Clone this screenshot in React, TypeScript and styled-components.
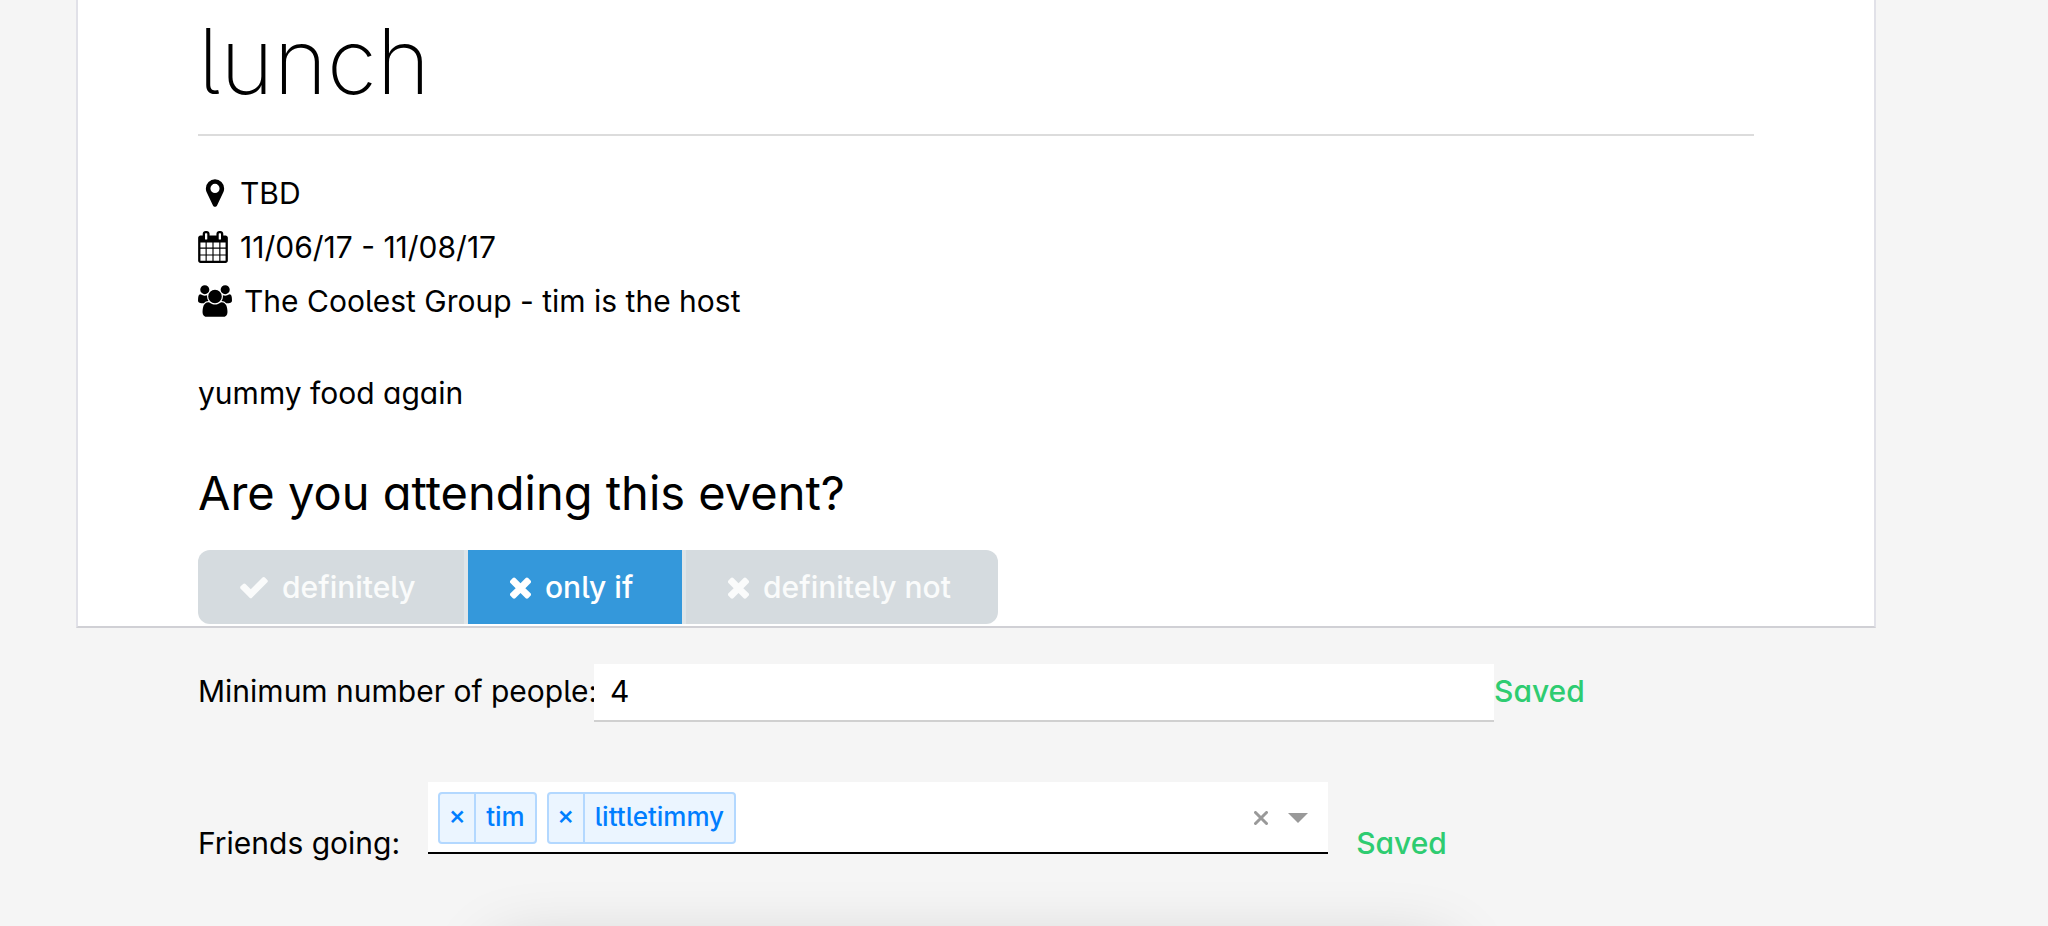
import React, { useState } from "react";
import styled, { createGlobalStyle } from "styled-components";

const GlobalStyle = createGlobalStyle`
  *, *::before, *::after { box-sizing: border-box; }
  body {
    margin: 0;
    background: #f5f5f5;
    color: #000;
    font-family: Inter, "Liberation Sans", sans-serif;
    font-size: 30px;
    line-height: 54px;
    font-feature-settings: "cv05", "cv11";
  }
  button, input { font: inherit; font-feature-settings: inherit; color: inherit; }
`;

const Page = styled.main`
  margin: 0 172px 0 76px;
`;

const Card = styled.section`
  padding: 0 120px 2px;
  background: #fff;
  border: 2px solid #e1e1e8;
  border-top: 0;
  border-bottom-color: #d0d0d5;
`;

const Title = styled.h1`
  margin: 0 0 30px;
  padding-bottom: 12px;
  border-bottom: 2px solid #dcdcdc;
  font-size: 91px;
  font-weight: 200;
  line-height: 122px;
`;

const Details = styled.ul`
  margin: 0 0 38px;
  padding: 0;
  list-style: none;
`;

const Detail = styled.li`
  display: flex;
  align-items: center;
  gap: 12px;
`;

const Icon = styled.svg`
  flex: none;
  height: 32px;
  fill: currentColor;
`;

const Description = styled.p`
  margin: 0 0 46px;
`;

const Question = styled.h2`
  margin: 0 0 30px;
  font-size: 47px;
  font-weight: 400;
`;

const Choices = styled.div`
  display: flex;
  height: 74px;
`;

const Choice = styled.button<{ $active: boolean; $width: number }>`
  display: flex;
  align-items: center;
  gap: 12px;
  width: ${(p) => p.$width}px;
  padding: 0 0 0 40px;
  border: 0;
  border-right: 4px solid #e0e5e8;
  background: ${(p) => (p.$active ? "#3498db" : "#d5dbdf")};
  color: ${(p) => (p.$active ? "#fff" : "#fafbfb")};
  font-weight: 500;
  white-space: nowrap;
  cursor: pointer;

  &:first-child { border-radius: 12px 0 0 12px; }
  &:last-child { border-radius: 0 12px 12px 0; border-right: 0; }
`;

const Row = styled.div<{ $top: number; $gap: number }>`
  display: flex;
  align-items: flex-end;
  gap: ${(p) => p.$gap}px;
  margin-top: ${(p) => p.$top}px;
  white-space: nowrap;
`;

const Label = styled.label<{ $width?: number }>`
  flex: none;
  width: ${(p) => (p.$width ? `${p.$width}px` : "auto")};
  padding-left: 122px;
`;

const CountRow = styled(Row)`
  align-items: flex-start;
`;

const CountInput = styled.input`
  flex: 0 0 50%;
  min-width: 0;
  height: 58px;
  padding: 0 16px 2px;
  border: 0;
  border-bottom: 2px solid #d0d0d0;
  border-radius: 0;
  outline: 0;
  background: #fff;
`;

const Saved = styled.span`
  color: #2ecc71;
  font-weight: 500;
`;

const Picker = styled.div`
  display: flex;
  align-items: center;
  flex: 0 0 50%;
  height: 72px;
  margin-bottom: 16px;
  padding: 2px 20px 0 10px;
  gap: 10px;
  background: #fff;
  border-bottom: 2px solid #000;
`;

const PickerInput = styled.input`
  flex: 1;
  min-width: 0;
  padding: 0;
  border: 0;
  outline: 0;
  background: transparent;
`;

const Chip = styled.span`
  display: flex;
  height: 52px;
  border: 2px solid #b3d8ff;
  border-radius: 4px;
  background: #ebf5ff;
  color: #007eff;
  font-size: 26px;
  font-weight: 500;
  line-height: 46px;
`;

const ChipRemove = styled.button`
  width: 36px;
  padding: 0 0 6px;
  border: 0;
  border-right: 2px solid #b3d8ff;
  background: none;
  line-height: 40px;
  cursor: pointer;
`;

const ChipName = styled.span`
  padding: 0 10px;
`;

const PickerButton = styled.button`
  display: flex;
  padding: 0;
  border: 0;
  background: none;
  color: #999;
  cursor: pointer;

  & + & { margin-left: 10px; }
`;

const NextPanel = styled.div`
  position: fixed;
  left: 496px;
  right: 600px;
  bottom: -224px;
  height: 200px;
  box-shadow: 0 0 70px rgba(0, 0, 0, 0.2);
  pointer-events: none;
`;

const MarkerIcon = () => (
  <Icon viewBox="-56 0 1680 1792" width="30" aria-hidden="true">
    <path d="M1152 640q0-106-75-181t-181-75-181 75-75 181 75 181 181 75 181-75 75-181zm256 0q0 109-33 179l-364 774q-16 33-47.500 52t-67.500 19-67.500-19-46.500-52l-365-774q-33-70-33-179 0-212 150-362t362-150 362 150 150 362z" />
  </Icon>
);

const CalendarIcon = () => (
  <Icon viewBox="64 0 1664 1792" width="30" aria-hidden="true">
    <path d="M192 1664h288v-288h-288v288zm352 0h320v-288h-320v288zm-352-352h288v-320h-288v320zm352 0h320v-320h-320v320zm-352-384h288v-288h-288v288zm736 736h320v-288h-320v288zm-384-736h320v-288h-320v288zm768 736h288v-288h-288v288zm-384-352h320v-320h-320v320zm-352-864v-288q0-13-9.500-22.500t-22.500-9.500h-64q-13 0-22.500 9.500t-9.500 22.500v288q0 13 9.500 22.500t22.500 9.500h64q13 0 22.500-9.500t9.500-22.500zm736 864h288v-320h-288v320zm-384-384h320v-288h-320v288zm384 0h288v-288h-288v288zm32-480v-288q0-13-9.500-22.500t-22.500-9.500h-64q-13 0-22.500 9.500t-9.500 22.500v288q0 13 9.500 22.500t22.500 9.500h64q13 0 22.500-9.500t9.500-22.500zm384-64v1280q0 52-38 90t-90 38h-1408q-52 0-90-38t-38-90v-1280q0-52 38-90t90-38h128v-96q0-66 47-113t113-47h64q66 0 113 47t47 113v96h384v-96q0-66 47-113t113-47h64q66 0 113 47t47 113v96h128q52 0 90 38t38 90z" />
  </Icon>
);

const UsersIcon = () => (
  <Icon viewBox="0 0 1920 1792" width="34" aria-hidden="true">
    <path d="M593 896q-162 5-265 128h-134q-82 0-138-40.500t-56-118.500q0-353 124-353 6 0 43.500 21t97.500 42.500 119 21.500q67 0 133-23-5 37-5 66 0 139 81 256zm1071 637q0 120-73 189.500t-194 69.500h-874q-121 0-194-69.500t-73-189.500q0-53 3.500-103.500t14-109 26.500-108.500 43-97.500 62-81 85.500-53.500 111.500-20q10 0 43 21.500t73 48 107 48 135 21.500 135-21.500 107-48 73-48 43-21.500q61 0 111.500 20t85.500 53.500 62 81 43 97.500 26.500 108.500 14 109 3.500 103.500zm-1024-1277q0 106-75 181t-181 75-181-75-75-181 75-181 181-75 181 75 75 181zm704 384q0 159-112.500 271.500t-271.500 112.500-271.500-112.500-112.500-271.500 112.500-271.500 271.500-112.500 271.500 112.500 112.500 271.500zm576 225q0 78-56 118.500t-138 40.500h-134q-103-123-265-128 81-117 81-256 0-29-5-66 66 23 133 23 59 0 119-21.500t97.500-42.500 43.500-21q124 0 124 353zm-128-609q0 106-75 181t-181 75-181-75-75-181 75-181 181-75 181 75 75 181z" />
  </Icon>
);

const CheckIcon = () => (
  <Icon viewBox="0 0 1792 1792" width="32" aria-hidden="true">
    <path d="M1671 566q0 40-28 68l-724 724-136 136q-28 28-68 28t-68-28l-136-136-362-362q-28-28-28-68t28-68l136-136q28-28 68-28t68 28l294 295 656-657q28-28 68-28t68 28l136 136q28 28 28 68z" />
  </Icon>
);

const TimesIcon = () => (
  <Icon viewBox="192 0 1408 1792" width="25" aria-hidden="true">
    <path d="M1490 1322q0 40-28 68l-136 136q-28 28-68 28t-68-28l-294-294-294 294q-28 28-68 28t-68-28l-136-136q-28-28-28-68t28-68l294-294-294-294q-28-28-28-68t28-68l136-136q28-28 68-28t68 28l294 294 294-294q28-28 68-28t68 28l136 136q28 28 28 68t-28 68l-294 294 294 294q28 28 28 68z" />
  </Icon>
);

const choices = [
  { name: "definitely", icon: <CheckIcon />, width: 270 },
  { name: "only if", icon: <TimesIcon />, width: 218 },
  { name: "definitely not", icon: <TimesIcon />, width: 312 },
];

export default function App() {
  const [answer, setAnswer] = useState("only if");
  const [minimum, setMinimum] = useState("4");
  const [friends, setFriends] = useState(["tim", "littletimmy"]);

  return (
    <>
      <GlobalStyle />
      <Page>
        <Card>
          <Title>lunch</Title>
          <Details>
            <Detail><MarkerIcon />TBD</Detail>
            <Detail><CalendarIcon />11/06/17 - 11/08/17</Detail>
            <Detail><UsersIcon />The Coolest Group - tim is the host</Detail>
          </Details>
          <Description>yummy food again</Description>
          <Question>Are you attending this event?</Question>
          <Choices>
            {choices.map((c) => (
              <Choice
                key={c.name}
                type="button"
                $width={c.width}
                $active={answer === c.name}
                aria-pressed={answer === c.name}
                onClick={() => setAnswer(c.name)}
              >
                {c.icon}
                {c.name}
              </Choice>
            ))}
          </Choices>
        </Card>

        <CountRow $top={36} $gap={0}>
          <Label htmlFor="minimum" $width={518}>Minimum number of people:</Label>
          <CountInput id="minimum" value={minimum} onChange={(e) => setMinimum(e.target.value)} />
          <Saved>Saved</Saved>
        </CountRow>

        <Row $top={60} $gap={28}>
          <Label htmlFor="friends">Friends going:</Label>
          <Picker>
            {friends.map((f) => (
              <Chip key={f}>
                <ChipRemove
                  type="button"
                  aria-label={`Remove ${f}`}
                  onClick={() => setFriends(friends.filter((x) => x !== f))}
                >
                  ×
                </ChipRemove>
                <ChipName>{f}</ChipName>
              </Chip>
            ))}
            <PickerInput id="friends" />
            <PickerButton type="button" aria-label="Clear all" onClick={() => setFriends([])}>
              <svg width="14" height="14" viewBox="0 0 14 14" stroke="currentColor" strokeWidth="3" strokeLinecap="round">
                <path d="M1.500 1.500l11 11M12.500 1.500l-11 11" />
              </svg>
            </PickerButton>
            <PickerButton type="button" aria-label="Show friends">
              <svg width="20" height="10" viewBox="0 0 20 10" fill="currentColor">
                <path d="M0 0h20L10 10z" />
              </svg>
            </PickerButton>
          </Picker>
          <Saved>Saved</Saved>
        </Row>
      </Page>
      <NextPanel />
    </>
  );
}
